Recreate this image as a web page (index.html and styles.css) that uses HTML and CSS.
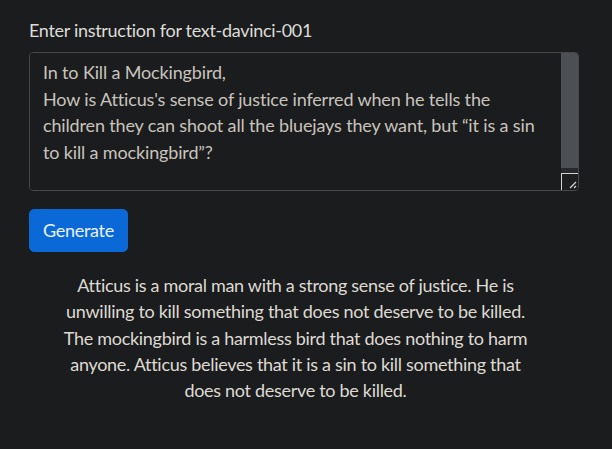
FILE: index.html
```html
<!DOCTYPE html>
<html lang="en">
<head>
<meta charset="utf-8">
<title>Instruction</title>
<link rel="stylesheet" href="styles.css">
</head>
<body>
<main class="page">
  <label class="label" for="prompt">Enter instruction for text-davinci-001</label>
  <div class="field">
    <textarea id="prompt" class="prompt" spellcheck="false">In to Kill a Mockingbird,
How is Atticus's sense of justice inferred when he tells the
children they can shoot all the bluejays they want, but “it is a sin
to kill a mockingbird”?</textarea>
    <div class="scrollbar" aria-hidden="true">
      <div class="thumb"></div>
      <div class="track"></div>
      <div class="resizer">
        <svg width="16" height="16" viewBox="0 0 16 16"><path d="M14 8 L8 14 M14 12 L12 14" stroke="#d6d6d6" stroke-width="1.2" fill="none"/></svg>
      </div>
    </div>
  </div>
  <div class="actions"><button class="btn" type="button">Generate</button></div>
  <p class="output">Atticus is a moral man with a strong sense of justice. He is<br>unwilling to kill something that does not deserve to be killed.<br>The mockingbird is a harmless bird that does nothing to harm<br>anyone. Atticus believes that it is a sin to kill something that<br>does not deserve to be killed.</p>
</main>
</body>
</html>
```

FILE: styles.css
```css
html, body {
  margin: 0;
  padding: 0;
  background: #1b1c1e;
}
body {
  font-family: "Lato", "Open Sans", sans-serif;
  font-size: 18px;
  line-height: 26.4px;
  letter-spacing: -0.3px;
  color: #dcdad6;
}
.page {
  display: flex;
  flex-direction: column;
  padding: 17px 33px 0 29px;
}
.label {
  display: block;
  color: #dedcd8;
}
.field {
  box-sizing: border-box;
  margin-top: 9px;
  width: 550px;
  height: 139px;
  display: flex;
  border: 1px solid #46484b;
  border-radius: 4px;
  overflow: hidden;
}
.prompt {
  flex: 1;
  min-width: 0;
  margin: 0;
  padding: 6px 6px 6px 13px;
  border: 0;
  background: #1b1c1e;
  color: #c8c4bd;
  font: inherit;
  letter-spacing: -0.15px;
  white-space: pre-wrap;
  overflow: hidden;
  resize: none;
  outline: none;
}
.scrollbar {
  width: 17px;
  display: flex;
  flex-direction: column;
  background: #27282b;
}
.thumb {
  height: 115px;
  background: #4c5054;
}
.track {
  flex: 1;
}
.resizer {
  box-sizing: border-box;
  height: 17px;
  border-top: 1px solid #d4d4d4;
  border-left: 1px solid #d4d4d4;
  background: #1d1e20;
  display: flex;
}
.actions {
  display: flex;
  margin-top: 18px;
}
.btn {
  font: inherit;
  letter-spacing: inherit;
  color: #eaf2ff;
  background: #0b69d7;
  border: 1px solid #0b69d7;
  border-radius: 5px;
  padding: 7px 13px;
  line-height: 26.4px;
}
.output {
  margin: 20px 17px 0 0;
  text-align: center;
  color: #dedad3;
}
```
